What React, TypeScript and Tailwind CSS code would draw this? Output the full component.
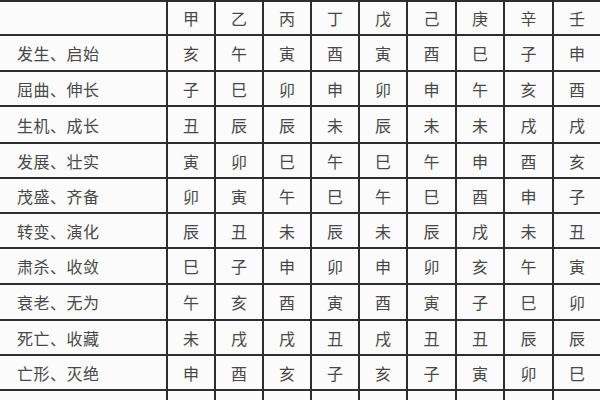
const stems = ["甲", "乙", "丙", "丁", "戊", "己", "庚", "辛", "壬"];

const rows: [string, string[]][] = [
  ["发生、启始", ["亥", "午", "寅", "酉", "寅", "酉", "巳", "子", "申"]],
  ["屈曲、伸长", ["子", "巳", "卯", "申", "卯", "申", "午", "亥", "酉"]],
  ["生机、成长", ["丑", "辰", "辰", "未", "辰", "未", "未", "戌", "戌"]],
  ["发展、壮实", ["寅", "卯", "巳", "午", "巳", "午", "申", "酉", "亥"]],
  ["茂盛、齐备", ["卯", "寅", "午", "巳", "午", "巳", "酉", "申", "子"]],
  ["转变、演化", ["辰", "丑", "未", "辰", "未", "辰", "戌", "未", "丑"]],
  ["肃杀、收敛", ["巳", "子", "申", "卯", "申", "卯", "亥", "午", "寅"]],
  ["衰老、无为", ["午", "亥", "酉", "寅", "酉", "寅", "子", "巳", "卯"]],
  ["死亡、收藏", ["未", "戌", "戌", "丑", "戌", "丑", "丑", "辰", "辰"]],
  ["亡形、灭绝", ["申", "酉", "亥", "子", "亥", "子", "寅", "卯", "巳"]],
  ["结聚、胎养", ["酉", "申", "子", "亥", "子", "亥", "卯", "寅", "午"]],
];

export default function App() {
  return (
    <div
      className="h-[400px] w-[600px] overflow-hidden bg-[#fbfbfb] text-[16px] text-[#484848]"
      style={{ fontFamily: '"Noto Sans CJK SC", "Noto Sans", sans-serif' }}
    >
      <div className="grid w-[640px] grid-cols-[166px_48px_48px_48px_48px_48px_49px_48px_49px_48px] grid-rows-[34px_36px_35px_37px_35px_35px_35px_36px_36px_35px_35px_36px] border-t-2 border-[#2e2e2e]">
        <div className="border-b-2 border-[#2e2e2e]" />
        {stems.map((s) => (
          <div
            key={s}
            className="flex items-center justify-center border-b-2 border-l-2 border-[#2e2e2e]"
          >
            {s}
          </div>
        ))}
        {rows.map(([label, cells]) => (
          <>
            <div
              key={label}
              className="flex items-center border-b-2 border-[#2e2e2e] pl-[17px] tracking-[0.5px]"
            >
              {label}
            </div>
            {cells.map((c, i) => (
              <div
                key={label + i}
                className="flex items-center justify-center border-b-2 border-l-2 border-[#2e2e2e]"
              >
                {c}
              </div>
            ))}
          </>
        ))}
      </div>
    </div>
  );
}
